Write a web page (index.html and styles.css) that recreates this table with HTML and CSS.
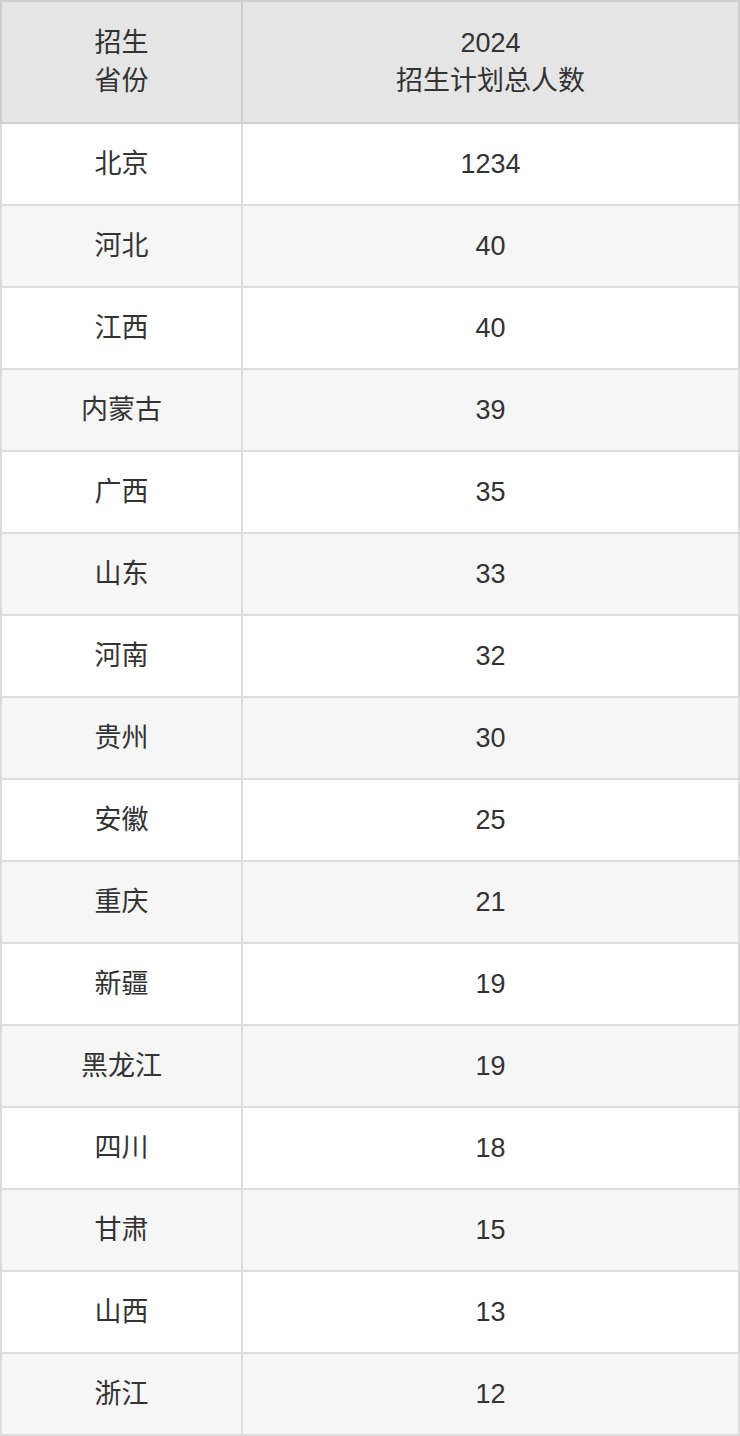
FILE: index.html
```html
<!DOCTYPE html>
<html lang="zh">
<head>
<meta charset="utf-8">
<link rel="stylesheet" href="styles.css">
</head>
<body>
<table class="plan">
  <colgroup><col class="c1"><col class="c2"></colgroup>
  <thead>
    <tr><th>招生<br>省份</th><th>2024<br>招生计划总人数</th></tr>
  </thead>
  <tbody>
    <tr><td>北京</td><td>1234</td></tr>
    <tr><td>河北</td><td>40</td></tr>
    <tr><td>江西</td><td>40</td></tr>
    <tr><td>内蒙古</td><td>39</td></tr>
    <tr><td>广西</td><td>35</td></tr>
    <tr><td>山东</td><td>33</td></tr>
    <tr><td>河南</td><td>32</td></tr>
    <tr><td>贵州</td><td>30</td></tr>
    <tr><td>安徽</td><td>25</td></tr>
    <tr><td>重庆</td><td>21</td></tr>
    <tr><td>新疆</td><td>19</td></tr>
    <tr><td>黑龙江</td><td>19</td></tr>
    <tr><td>四川</td><td>18</td></tr>
    <tr><td>甘肃</td><td>15</td></tr>
    <tr><td>山西</td><td>13</td></tr>
    <tr><td>浙江</td><td>12</td></tr>
  </tbody>
</table>
</body>
</html>
```
FILE: styles.css
```css
html, body {
  margin: 0;
  padding: 0;
  background: #ffffff;
}
.plan {
  width: 740px;
  border-collapse: collapse;
  table-layout: fixed;
  font-family: "Liberation Sans", "Noto Sans CJK SC", sans-serif;
  font-size: 27px;
  color: #333333;
}
.c1 { width: 241px; }
.plan th, .plan td {
  border: 2px solid #dcdcdc;
  text-align: center;
  vertical-align: middle;
  padding: 0;
}
.plan th {
  background: #e5e5e5;
  border-color: #cfcfcf;
  font-weight: normal;
  height: 120px;
  line-height: 38px;
}
.plan td {
  height: 80px;
  line-height: 30px;
}
.plan tbody tr:nth-child(even) td {
  background: #f6f6f6;
}
```
